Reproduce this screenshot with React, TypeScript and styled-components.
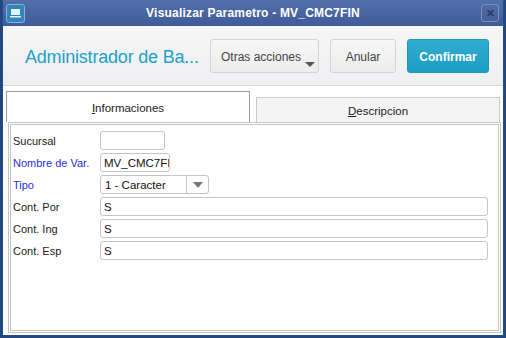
import { createGlobalStyle, styled } from "styled-components";

const GlobalStyle = createGlobalStyle`
  html, body {
    margin: 0;
    padding: 0;
    background: #24467e;
    font-family: "Liberation Sans", Arial, sans-serif;
  }
`;

const Window = styled.div`
  margin-left: 2px;
  width: 500px;
  height: 335px;
  border: 1px solid #1b4f8f;
  border-top: none;
  background: #ffffff;
  display: flex;
  flex-direction: column;
  overflow: hidden;
`;

const TitleBar = styled.div`
  height: 26px;
  display: flex;
  align-items: center;
  padding: 0 4px 0 3px;
  background: linear-gradient(#5170ab, #3f5b98);
  color: #ffffff;
`;

const AppIcon = styled.div`
  width: 17px;
  height: 17px;
  border: 1px solid #8fb0d8;
  border-radius: 3px;
  background: #2f86c0;
  display: flex;
  align-items: center;
  justify-content: center;
`;

const TitleText = styled.div`
  flex: 1;
  text-align: center;
  font-size: 12px;
  font-weight: bold;
  letter-spacing: 0.2px;
`;

const CloseButton = styled.div`
  width: 16px;
  height: 16px;
  border: 1px solid #7b90bd;
  border-radius: 3px;
  display: flex;
  align-items: center;
  justify-content: center;
  color: #2b3a5c;
  font-size: 11px;
  font-weight: bold;
`;

const Header = styled.div`
  height: 59px;
  display: flex;
  align-items: center;
  padding: 0 14px 0 22px;
  background: linear-gradient(#f6f6f6, #eeeff1);
  border-bottom: 1px solid #d6d6d6;
`;

const Heading = styled.div`
  flex: 1;
  min-width: 0;
  white-space: nowrap;
  font-size: 18px;
  letter-spacing: -0.2px;
  color: #1e9fcb;
  margin-top: 3px;
`;

const Actions = styled.div`
  display: flex;
  gap: 11px;
`;

const ActionButton = styled.div<{ $primary?: boolean; $width: number }>`
  position: relative;
  width: ${(p) => p.$width}px;
  height: 34px;
  box-sizing: border-box;
  border-radius: 3px;
  border: 1px solid ${(p) => (p.$primary ? "#1e97bb" : "#d3d3d3")};
  background: ${(p) =>
    p.$primary ? "linear-gradient(#33adcf, #1a9dc3)" : "linear-gradient(#f7f7f7, #ececec)"};
  color: ${(p) => (p.$primary ? "#ffffff" : "#444444")};
  font-size: 12px;
  font-weight: ${(p) => (p.$primary ? "bold" : "normal")};
  display: flex;
  align-items: center;
  justify-content: center;
  padding-top: 2px;
`;

const LeftLabel = styled.span`
  position: absolute;
  left: 10px;
  top: 10px;
`;

const Caret = styled.span`
  position: absolute;
  right: 3px;
  bottom: 5px;
  width: 0;
  height: 0;
  border-left: 5px solid transparent;
  border-right: 5px solid transparent;
  border-top: 5px solid #555555;
`;

const Body = styled.div`
  flex: 1;
  display: flex;
  flex-direction: column;
  padding: 5px 2px 2px 3px;
`;

const Tabs = styled.div`
  display: flex;
  align-items: flex-end;
  gap: 6px;
  height: 31px;
`;

const Tab = styled.div<{ $active?: boolean }>`
  flex: 1;
  box-sizing: border-box;
  height: ${(p) => (p.$active ? 31 : 25)}px;
  border: 1px solid ${(p) => (p.$active ? "#9e9e9e" : "#cbcbcb")};
  border-bottom: none;
  background: ${(p) => (p.$active ? "#ffffff" : "#f4f4f4")};
  font-size: 11.5px;
  color: #222222;
  display: flex;
  align-items: center;
  justify-content: center;
  padding-top: 1px;
  margin-right: ${(p) => (p.$active ? 0 : 1)}px;
`;

const Panel = styled.div`
  flex: 1;
  border: 3px double #c6c6c6;
  margin-left: 2px;
  padding: 6px 10px 0 2px;
  display: flex;
  flex-direction: column;
  gap: 3px;
`;

const Row = styled.div`
  display: flex;
  align-items: center;
  height: 19px;
`;

const Label = styled.div<{ $required?: boolean }>`
  width: 87px;
  font-size: 11px;
  color: ${(p) => (p.$required ? "#1f2fe0" : "#1a1a1a")};
`;

const Field = styled.div<{ $width?: number }>`
  box-sizing: border-box;
  height: 19px;
  width: ${(p) => (p.$width ? `${p.$width}px` : "auto")};
  flex: ${(p) => (p.$width ? "none" : 1)};
  border: 1px solid #c4c4c4;
  border-radius: 3px;
  background: #ffffff;
  font-size: 11.5px;
  color: #111111;
  padding: 0 3px;
  display: flex;
  align-items: center;
  overflow: hidden;
  white-space: nowrap;
`;

const SelectField = styled(Field)`
  padding-right: 0;
`;

const SelectText = styled.span`
  flex: 1;
  padding-left: 1px;
`;

const SelectArrow = styled.span`
  width: 21px;
  height: 100%;
  border-left: 1px solid #c4c4c4;
  display: flex;
  align-items: center;
  justify-content: center;

  &::after {
    content: "";
    border-left: 5px solid transparent;
    border-right: 5px solid transparent;
    border-top: 6px solid #777777;
  }
`;

export default function App() {
  return (
    <>
      <GlobalStyle />
      <Window>
        <TitleBar>
          <AppIcon>
            <svg width="11" height="10" viewBox="0 0 11 10">
              <rect x="1" y="1" width="9" height="6" fill="#e8f4fb" />
              <rect x="0" y="8" width="11" height="1.5" fill="#e8f4fb" />
            </svg>
          </AppIcon>
          <TitleText>Visualizar Parametro - MV_CMC7FIN</TitleText>
          <CloseButton>✕</CloseButton>
        </TitleBar>
        <Header>
          <Heading>Administrador de Ba...</Heading>
          <Actions>
            <ActionButton $width={109}>
              <LeftLabel>Otras acciones</LeftLabel>
              <Caret />
            </ActionButton>
            <ActionButton $width={66}>Anular</ActionButton>
            <ActionButton $width={82} $primary>
              Confirmar
            </ActionButton>
          </Actions>
        </Header>
        <Body>
          <Tabs>
            <Tab $active>
              <span>
                <u>I</u>nformaciones
              </span>
            </Tab>
            <Tab>
              <span>
                <u>D</u>escripcion
              </span>
            </Tab>
          </Tabs>
          <Panel>
            <Row>
              <Label>Sucursal</Label>
              <Field $width={65} />
            </Row>
            <Row>
              <Label $required>Nombre de Var.</Label>
              <Field $width={70}>MV_CMC7FIN</Field>
            </Row>
            <Row>
              <Label $required>Tipo</Label>
              <SelectField $width={109}>
                <SelectText>1 - Caracter</SelectText>
                <SelectArrow />
              </SelectField>
            </Row>
            <Row>
              <Label>Cont. Por</Label>
              <Field>S</Field>
            </Row>
            <Row>
              <Label>Cont. Ing</Label>
              <Field>S</Field>
            </Row>
            <Row>
              <Label>Cont. Esp</Label>
              <Field>S</Field>
            </Row>
          </Panel>
        </Body>
      </Window>
    </>
  );
}
